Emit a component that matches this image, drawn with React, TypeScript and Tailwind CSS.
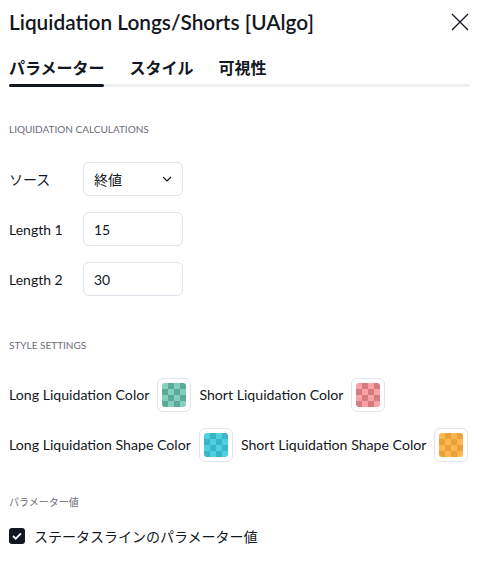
import React from 'react';

const FONT = { fontFamily: 'Lato, "Noto Sans CJK JP", sans-serif' };

const SWATCHES: Record<string, [string, string]> = {
  teal: ['#81cfbf', '#5fa79a'],
  pink: ['#faa2a4', '#d67b7f'],
  cyan: ['#4dd0e1', '#3cb4c5'],
  orange: ['#ffb74d', '#e7a23e'],
};

function Swatch({ color }: { color: keyof typeof SWATCHES }) {
  const [light, dark] = SWATCHES[color];
  return (
    <div className="ml-2 flex h-[34px] w-[34px] shrink-0 items-center justify-center rounded-md border border-[#e0e3eb] bg-white">
      <div className="grid h-6 w-6 grid-cols-4 grid-rows-4 overflow-hidden rounded-[3px]">
        {Array.from({ length: 16 }, (_, i) => {
          const r = Math.floor(i / 4);
          const c = i % 4;
          return <div key={i} style={{ background: (r + c) % 2 === 0 ? light : dark }} />;
        })}
      </div>
    </div>
  );
}

function SectionLabel({ children }: { children: React.ReactNode }) {
  return <div className="h-4 text-[10px] leading-4 text-[#6a6d78]">{children}</div>;
}

function FieldRow({ label, children }: { label: string; children: React.ReactNode }) {
  return (
    <div className="flex h-[34px] items-center">
      <div className="w-[74px] text-[14px] text-[#131722]">{label}</div>
      {children}
    </div>
  );
}

export default function App() {
  return (
    <div className="h-[562px] w-[481px] overflow-hidden bg-white px-[9px] text-[#131722]" style={FONT}>
      <div className="flex h-[44px] items-center justify-between">
        <h1 className="text-[20.8px] font-semibold leading-6">Liquidation Longs/Shorts [UAlgo]</h1>
        <svg width="18" height="18" viewBox="0 0 18 18" className="mr-[3px]">
          <path d="M1 1L17 17M17 1L1 17" stroke="#131722" strokeWidth="1.3" fill="none" />
        </svg>
      </div>

      <div className="pt-3">
        <div className="flex h-6 gap-[25px] text-[16px] font-bold leading-6">
          <span>パラメーター</span>
          <span>スタイル</span>
          <span>可視性</span>
        </div>
        <div className="mt-1 flex h-[3px] w-[461px] rounded-full bg-[#eeeff1]">
          <div className="h-[3px] w-[95px] rounded-full bg-[#131722]" />
        </div>
      </div>

      <div className="mt-[34px]">
        <SectionLabel>LIQUIDATION CALCULATIONS</SectionLabel>
      </div>

      <div className="mt-[25px] flex flex-col gap-4">
        <FieldRow label="ソース">
          <div className="flex h-[34px] w-[100px] items-center justify-between rounded-md border border-[#e0e3eb] pl-[10px] pr-[10px] text-[14px]">
            <span>終値</span>
            <svg width="10" height="6" viewBox="0 0 10 6">
              <path d="M1 1l4 4 4-4" stroke="#131722" strokeWidth="1.2" fill="none" />
            </svg>
          </div>
        </FieldRow>
        <FieldRow label="Length 1">
          <div className="flex h-[34px] w-[100px] items-center rounded-md border border-[#e0e3eb] pl-[10px] text-[14px]">15</div>
        </FieldRow>
        <FieldRow label="Length 2">
          <div className="flex h-[34px] w-[100px] items-center rounded-md border border-[#e0e3eb] pl-[10px] text-[14px]">30</div>
        </FieldRow>
      </div>

      <div className="mt-[41px]">
        <SectionLabel>STYLE SETTINGS</SectionLabel>
      </div>

      <div className="mt-[25px] flex flex-col gap-4 whitespace-nowrap text-[14.15px]">
        <div className="flex h-[34px] items-center">
          <span className="shrink-0">Long Liquidation Color</span>
          <Swatch color="teal" />
          <span className="ml-2 shrink-0">Short Liquidation Color</span>
          <Swatch color="pink" />
        </div>
        <div className="flex h-[34px] items-center">
          <span className="shrink-0">Long Liquidation Shape Color</span>
          <Swatch color="cyan" />
          <span className="ml-2 shrink-0">Short Liquidation Shape Color</span>
          <Swatch color="orange" />
        </div>
      </div>

      <div className="mt-8">
        <SectionLabel>パラメーター値</SectionLabel>
      </div>

      <div className="mt-[14px] flex h-6 items-center gap-[9px] text-[14px]">
        <div className="flex h-4 w-4 items-center justify-center rounded-[3px] bg-[#131722]">
          <svg width="10" height="8" viewBox="0 0 10 8">
            <path d="M1 4l2.7 2.7L9 1.3" stroke="white" strokeWidth="1.8" fill="none" />
          </svg>
        </div>
        <span>ステータスラインのパラメーター値</span>
      </div>
    </div>
  );
}
